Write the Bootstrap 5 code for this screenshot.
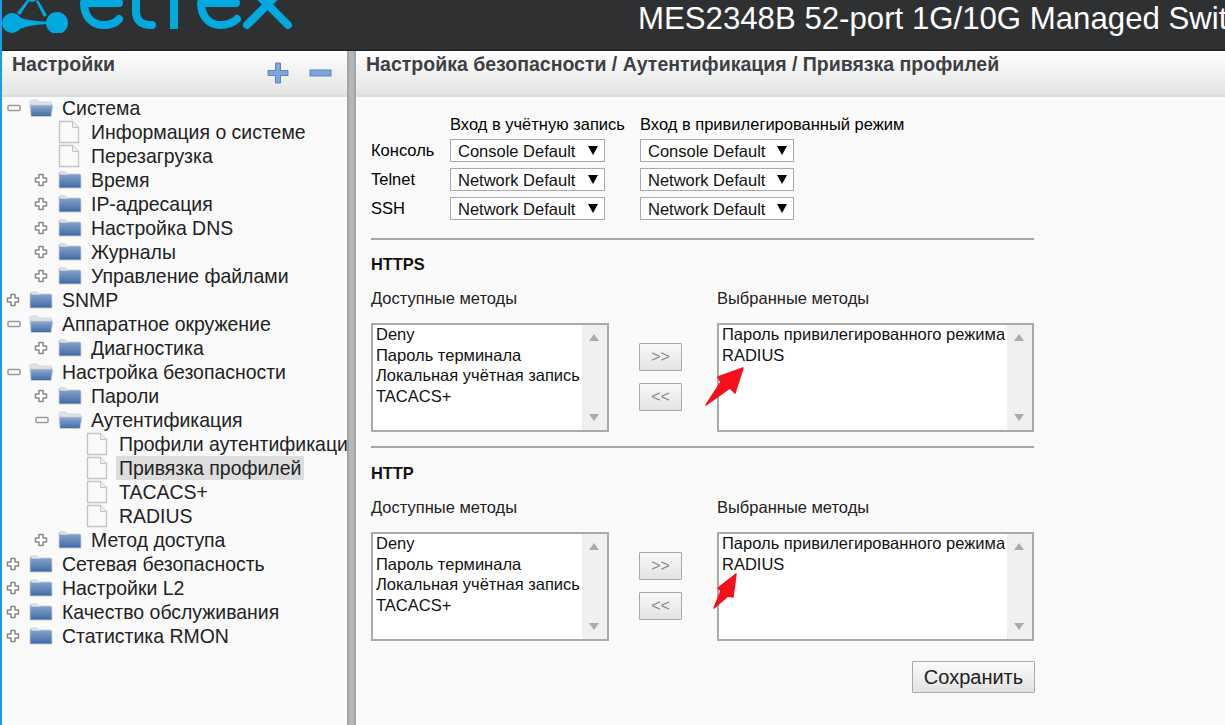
<!DOCTYPE html>
<html lang="ru">
<head>
<meta charset="utf-8">
<title>MES2348B</title>
<link rel="stylesheet" href="https://cdn.jsdelivr.net/npm/bootstrap@5.3.0/dist/css/bootstrap.min.css">
<style>
html,body{height:100%;overflow:hidden}
body{font-family:"Liberation Sans",Arial,sans-serif;font-size:16.5px;color:#000;background:#fafafa;border-left:2px solid #1e9be8;width:1225px;height:725px}
.top-bar{height:51px;background:#2f3032;border-bottom:1px solid #1d1d1d;overflow:hidden}
.logo-box{width:298px;flex:none}
.logo-box svg{display:block}
.dev-title{font-size:31.2px;line-height:38px;color:#fff;white-space:nowrap;padding-left:338px}
.work{height:674px}
.side-pane{width:345px;flex:none;overflow:hidden}
.pane-head{height:46px;background:linear-gradient(#fff,#e4e4e4);border-bottom:2px solid #dcdcdc;position:relative}
.pane-title{font-size:19.5px;font-weight:700;color:#3d4045;line-height:24px;padding:1px 0 0 10px}
.tool-btn{position:absolute;top:10px}
.split{width:9px;flex:none;background:#b6b6b6;border-left:2px solid #a4a4a4;border-right:2px solid #a4a4a4}
.main-pane{flex:1;min-width:0}
.tree-box{margin-top:-1px}
.tree-row{height:24px;line-height:24px;font-size:19.45px;display:flex;align-items:center;white-space:nowrap;color:#222}
.tw{width:23px;flex:none;display:flex}
.tw svg{display:block}
.tw .is-plus{margin-left:-1px}
.lv0 .tw{width:22px}
.lv0{padding-left:5px}.lv1{padding-left:33px}.lv2{padding-left:61px}
.lv0 .ico{width:33px}
.ico{width:33px;flex:none;display:block}
.sel-lab{background:#ddd;padding:0 3px;margin-left:-3px;line-height:24px}
.form-wrap{width:663px;margin-left:15px}
.auth-grid{display:grid;grid-template-columns:79px 190px auto;grid-template-rows:24px 29px 29px 29px;padding-top:15px;height:137px;align-items:center;white-space:nowrap}
.auth-grid .cap{align-self:start;height:24px;line-height:24px}
.fake-sel{display:flex;align-items:center;justify-content:space-between;height:23px;background:#fff;border:1px solid #aaa;padding:1px 6px 0 7px;line-height:21px;color:#111}
.w-sel{width:155px}.w-sel2{width:154px}
.fake-sel i{display:block;width:0;height:0;margin-top:-2px;border-left:5px solid transparent;border-right:5px solid transparent;border-top:9px solid #000}
.sep{height:2px;background:#a6a6a6}
.sep-mid{margin:14px 0 17px}
.sec-name{font-size:16.4px;font-weight:700;line-height:18px;color:#111;padding-bottom:13px;box-sizing:content-box;margin-top:-1px}
.cols{display:grid;grid-template-columns:238px 108px 317px;margin:0}
.gap-adj{margin-top:9px}
.col-lab{line-height:24px;color:#222}
.pick{height:109px;border:2px solid #aaa;background:#fff;display:flex;overflow:hidden}
.pick-items{flex:1;padding:0 0 0 3px;margin-top:-1px;line-height:20.7px;color:#111;white-space:nowrap;overflow:hidden;min-width:0}
.pick-bar{width:25px;flex:none;background:#f0f0f0;position:relative}
.pick-bar::before,.pick-bar::after{content:"";position:absolute;left:7px;border-left:5.5px solid transparent;border-right:5.5px solid transparent}
.pick-bar::before{top:9px;border-bottom:7px solid #aaa}
.pick-bar::after{bottom:9px;border-top:7px solid #aaa}
.mid-btns{padding:20px 0 0 30px;display:flex;flex-direction:column;gap:12px}
.mv-btn{width:43px;height:28px;padding:0;border:1px solid #a9a9a9;border-radius:1px;background:linear-gradient(#f9f9f9,#e3e3e3);color:#888;font-size:16px;line-height:24px}
.save-btn{height:32px;width:123px;padding:0;margin-right:-1px;border:1px solid #a9a9a9;border-radius:1px;background:linear-gradient(#fafafa,#e2e2e2);color:#222;font-size:20px;line-height:28px}
.arrow-mark{position:absolute;left:-14px;top:42px;pointer-events:none;overflow:visible}
.pick-wrap{position:relative}
</style>
</head>
<body>
<svg width="0" height="0" class="position-absolute">
<defs>
<linearGradient id="fg" x1="0" y1="0" x2="0" y2="1"><stop offset="0" stop-color="#8fabd0"/><stop offset="1" stop-color="#3f6ba6"/></linearGradient>
<symbol id="folder" viewBox="0 0 24 20"><path d="M1 3.500Q1 2 2.500 2H8l2 2h11.500Q23 4 23 5.500V18H1Z" fill="url(#fg)" stroke="#c8d0dc" stroke-width=".8"/><path d="M2 2.500h7l1.500 2H2Z" fill="#e8ebef"/></symbol>
<symbol id="fopen" viewBox="0 0 24 20"><path d="M1 3.500Q1 2 2.500 2H8l2 2h11.500Q23 4 23 5.500V7H1Z" fill="#dfe3e8" stroke="#c8d0dc" stroke-width=".8"/><path d="M1 7h23l-2 11.500H2Z" fill="url(#fg)" stroke="#c8d0dc" stroke-width=".8"/></symbol>
<symbol id="doc" viewBox="0 0 22 24"><path d="M1.500 1.500H14.500L20.500 7.500V22.500H1.500Z" fill="#f9f9f9" stroke="#c4c4c4" stroke-width="1.300"/><path d="M14.500 1.500V7.500H20.500" fill="#eee" stroke="#c4c4c4" stroke-width="1"/></symbol>
<symbol id="tplus" viewBox="0 0 14 14"><path d="M5 1.500H9V5H12.500V9H9V12.500H5V9H1.500V5H5Z" fill="#fff" stroke="#888" stroke-width="1.500" stroke-linejoin="round"/></symbol>
<symbol id="tminus" viewBox="0 0 14 14"><rect x="1" y="4.500" width="12" height="5" rx="1" fill="#fff" stroke="#999" stroke-width="1.500"/></symbol>
<clipPath id="logoclip"><rect x="0" y="0" width="298" height="33"/></clipPath>
</defs>
</svg>
<header class="top-bar d-flex">
<div class="logo-box"><svg width="298" height="50" viewBox="0 0 298 50" aria-label="eltex logo" role="img">
<g fill="#00a9df" clip-path="url(#logoclip)"><circle cx="10" cy="23" r="10"/><circle cx="55" cy="23" r="11"/><path d="M10 13Q20 21 44 21.500V24Q22 25 10 33Z"/><path d="M15 13L25 0L27 1.500L18 15ZM45 15L36 0L34 1.500L42 17Z"/><circle cx="30" cy="-4" r="6"/></g>
<g fill="none" stroke="#00a9df" stroke-width="8" stroke-linecap="round" clip-path="url(#logoclip)"><path d="M82 3H117M82 3C82 16 90 25 101 25C109 25 114 23 117 19"/><path d="M134 -6V11C134 21 140 25 150 25"/><path d="M172 -6V29" stroke-linecap="butt"/><path d="M199 3H234M199 3C199 16 207 25 218 25C226 25 231 23 235 19"/><path d="M245 25L272 -2"/><path d="M286 25L259 -2"/></g>
</svg></div>
<div class="dev-title">MES2348B 52-port 1G/10G Managed Switch</div>
</header>
<div class="work d-flex">
<aside class="side-pane">
<div class="pane-head"><div class="pane-title">Настройки</div>
<svg class="tool-btn" style="left:264px" width="24" height="24" viewBox="0 0 24 24"><path d="M9.500 2h5v7.500H22v5h-7.500V22h-5v-7.500H2v-5h7.500Z" fill="#7ea6d8" stroke="#5a86bf" stroke-width="1"/></svg>
<svg class="tool-btn" style="left:306px" width="24" height="24" viewBox="0 0 24 24"><rect x="2" y="9" width="21" height="6" fill="#7ea6d8" stroke="#5a86bf" stroke-width="1"/></svg>
</div>
<div class="tree-box" id="tree"></div>
</aside>
<div class="split"></div>
<main class="main-pane">
<div class="pane-head"><div class="pane-title">Настройка безопасности / Аутентификация / Привязка профилей</div></div>
<div class="form-wrap">
<div class="auth-grid">
<div></div><div class="cap">Вход в учётную запись</div><div class="cap">Вход в привилегированный режим</div>
<div>Консоль</div><div><div class="fake-sel w-sel">Console Default<i></i></div></div><div><div class="fake-sel w-sel2">Console Default<i></i></div></div>
<div>Telnet</div><div><div class="fake-sel w-sel">Network Default<i></i></div></div><div><div class="fake-sel w-sel2">Network Default<i></i></div></div>
<div>SSH</div><div><div class="fake-sel w-sel">Network Default<i></i></div></div><div><div class="fake-sel w-sel2">Network Default<i></i></div></div>
</div>
<div class="sep mt-1"></div>
<div id="secs"></div>
<div class="d-flex justify-content-end pt-3 mt-1"><button class="save-btn" type="button">Сохранить</button></div>
</div>
</main>
</div>
<script>
var T=[[0,'-','f','Система'],[1,'','d','Информация о системе'],[1,'','d','Перезагрузка'],[1,'+','f','Время'],[1,'+','f','IP-адресация'],[1,'+','f','Настройка DNS'],[1,'+','f','Журналы'],[1,'+','f','Управление файлами'],[0,'+','f','SNMP'],[0,'-','f','Аппаратное окружение'],[1,'+','f','Диагностика'],[0,'-','f','Настройка безопасности'],[1,'+','f','Пароли'],[1,'-','f','Аутентификация'],[2,'','d','Профили аутентификации'],[2,'','d','Привязка профилей',1],[2,'','d','TACACS+'],[2,'','d','RADIUS'],[1,'+','f','Метод доступа'],[0,'+','f','Сетевая безопасность'],[0,'+','f','Настройки L2'],[0,'+','f','Качество обслуживания'],[0,'+','f','Статистика RMON']];
document.getElementById('tree').innerHTML=T.map(function(r){
var tw=r[1]?'<svg width="14" height="14"'+(r[1]=='+'?' class="is-plus"':'')+'><use href="#'+(r[1]=='+'?'tplus':'tminus')+'"/></svg>':'';
var open=r[1]=='-';
var ic=r[2]=='d'?'<svg class="ico" width="22" height="24" viewBox="0 0 33 24"><use href="#doc" width="22" height="24" x="0"/></svg>':'<svg class="ico" width="24" height="20" viewBox="0 0 33 20"><use href="#'+(open?'fopen':'folder')+'" width="24" height="20"/></svg>';
return '<div class="tree-row lv'+r[0]+'"><span class="tw">'+tw+'</span><span class="ico">'+ic+'</span><span'+(r[4]?' class="sel-lab"':'')+'>'+r[3]+'</span></div>';
}).join('');
function pick(items,arrow){
return '<div class="pick-wrap"><div class="pick"><div class="pick-items">'+items.map(function(x){return '<div>'+x+'</div>'}).join('')+'</div><div class="pick-bar"></div></div>'+(arrow?arrow:'')+'</div>';
}
function sec(name,ar){
return '<div class="sec-name">'+name+'</div><div class="cols"><div class="col-lab">Доступные методы</div><div></div><div class="col-lab">Выбранные методы</div></div><div class="cols pt-1 gap-adj"><div class="w-100">'+pick(['Deny','Пароль терминала','Локальная учётная запись','TACACS+'])+'</div><div class="mid-btns"><button class="mv-btn" type="button">&gt;&gt;</button><button class="mv-btn" type="button">&lt;&lt;</button></div><div>'+pick(['Пароль привилегированного режима','RADIUS'],ar)+'</div></div>';
}
var ar1='<svg class="arrow-mark" width="42" height="44" viewBox="0 0 42 44"><path d="M40 3L32 28L27 23L3 40L18 17L15 12Z" fill="#f5101c" stroke="#f5101c" stroke-width="1.500" stroke-linejoin="round"/></svg>';
var ar2='<svg class="arrow-mark" width="42" height="44" viewBox="0 0 42 44"><path d="M33 0L30 23L25 22L11 34L18 17L15 14Z" fill="#f5101c" stroke="#f5101c" stroke-width="1.500" stroke-linejoin="round"/></svg>';
document.getElementById('secs').innerHTML='<div class="pt-3">'+sec('HTTPS',ar1)+'</div><div class="sep sep-mid"></div>'+sec('HTTP',ar2);
</script>
<script src="https://cdn.jsdelivr.net/npm/bootstrap@5.3.0/dist/js/bootstrap.bundle.min.js"></script>
</body>
</html>
